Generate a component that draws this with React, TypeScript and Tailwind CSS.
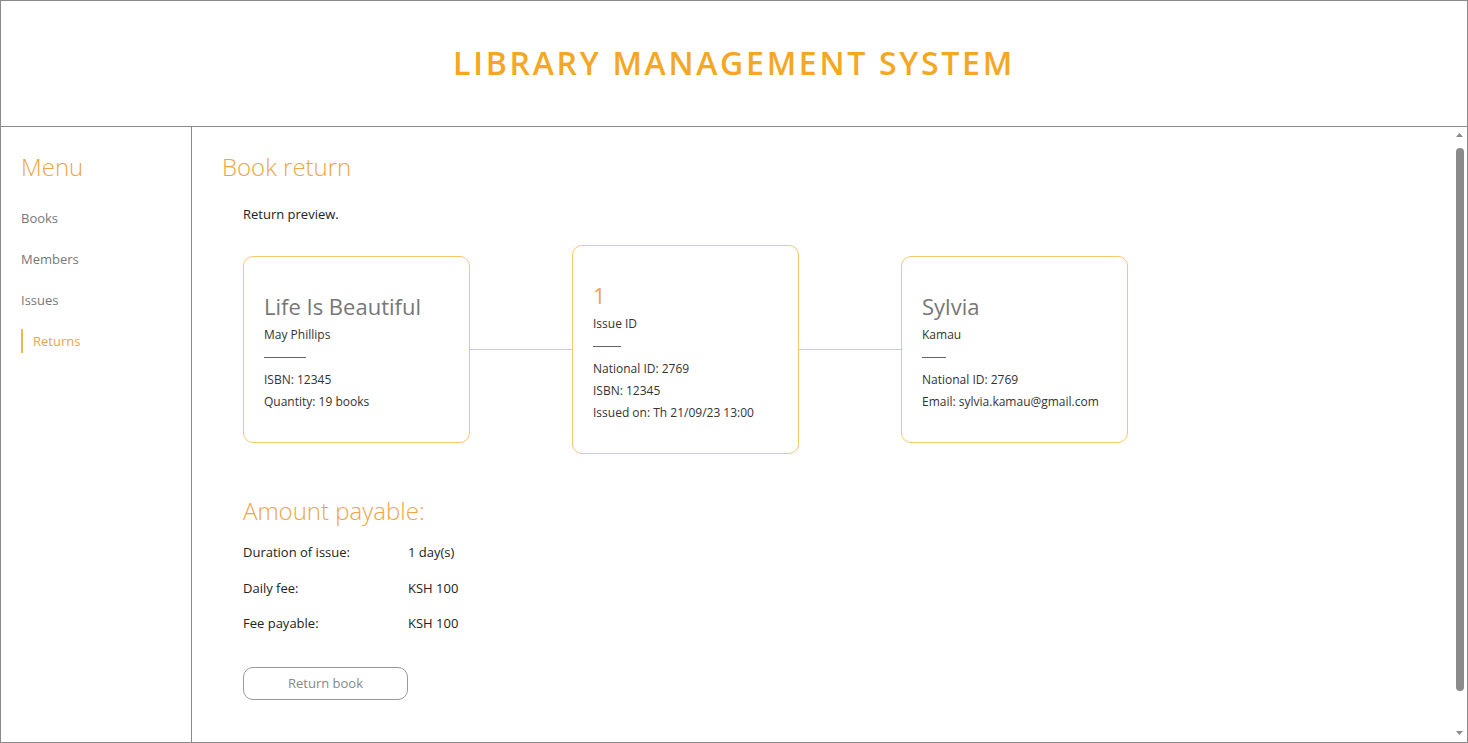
import React from 'react'

const font = { fontFamily: '"Open Sans", "Liberation Sans", sans-serif' }

const Card = ({ title, titleClass, sub, lineW, rows }: { title: string; titleClass: string; sub: string; lineW: string; rows: string[] }) => (
  <div className="w-[227px] rounded-[10px] border border-[#f6c76c] px-[20px] pt-[34px] pb-[31px] bg-white">
    <div className={`text-[22px] leading-[30px] ${titleClass}`}>{title}</div>
    <div className="text-[12px] leading-[18px] text-[#333] mt-[5px]">{sub}</div>
    <div className={`h-px bg-[#666] mt-[13px] mb-[13px] ${lineW}`}></div>
    <div className="flex flex-col gap-[4px]">
      {rows.map((r) => (
        <div key={r} className="text-[12px] leading-[18px] text-[#333]">{r}</div>
      ))}
    </div>
  </div>
)

const Connector = () => <div className="w-[102px] h-px bg-[#f6c76c]"></div>

const App = () => {
  return (
    <div className="h-[743px] w-full border border-[#8a8a8a] flex flex-col bg-white overflow-hidden" style={font}>
      <div className="h-[126px] shrink-0 border-b border-[#8a8a8a] flex items-center justify-center">
        <h1 className="text-[32px] font-semibold tracking-[0.085em] text-[#f5a623] mt-[-2px]">LIBRARY MANAGEMENT SYSTEM</h1>
      </div>

      <div className="flex flex-1 min-h-0">
        <div className="w-[191px] shrink-0 border-r border-[#8a8a8a] pl-[20px] pt-[24px]">
          <h2 className="text-[24px] leading-[32px] font-light text-[#efa445]">Menu</h2>
          <div className="mt-[26px] flex flex-col gap-[23px] text-[13px] leading-[18px] text-[#777]">
            <div>Books</div>
            <div>Members</div>
            <div>Issues</div>
            <div className="border-l-2 border-[#efb84a] pl-[10px] py-[3px] -my-[3px] text-[#efa445]">Returns</div>
          </div>
        </div>

        <div className="flex-1 pl-[30px] pt-[24px]">
          <h2 className="text-[24px] leading-[32px] font-light text-[#efa445]">Book return</h2>
          <div className="pl-[21px]">
            <p className="mt-[22px] text-[13px] leading-[18px] text-[#222]">Return preview.</p>

            <div className="mt-[22px] flex items-center">
              <Card
                title="Life Is Beautiful"
                titleClass="text-[#777]"
                sub="May Phillips"
                lineW="w-[42px]"
                rows={['ISBN: 12345', 'Quantity: 19 books']}
              />
              <Connector />
              <Card
                title="1"
                titleClass="text-[#efa445]"
                sub="Issue ID"
                lineW="w-[28px]"
                rows={['National ID: 2769', 'ISBN: 12345', 'Issued on: Th 21/09/23 13:00']}
              />
              <Connector />
              <Card
                title="Sylvia"
                titleClass="text-[#777]"
                sub="Kamau"
                lineW="w-[24px]"
                rows={['National ID: 2769', 'Email: sylvia.kamau@gmail.com']}
              />
            </div>

            <h2 className="mt-[41px] text-[24px] leading-[32px] font-light text-[#efa445]">Amount payable:</h2>
            <div className="mt-[16px] flex flex-col gap-[17.5px] text-[13px] leading-[18px] text-[#222]">
              <div className="flex"><span className="w-[165px]">Duration of issue:</span><span>1 day(s)</span></div>
              <div className="flex"><span className="w-[165px]">Daily fee:</span><span>KSH 100</span></div>
              <div className="flex"><span className="w-[165px]">Fee payable:</span><span>KSH 100</span></div>
            </div>

            <button className="mt-[35px] w-[165px] h-[33px] rounded-[10px] border border-[#999] text-[13px] text-[#888] bg-white">Return book</button>
          </div>
        </div>

        <div className="w-[15px] shrink-0 flex flex-col items-center pt-[5px] pb-[5px]">
          <svg width="7" height="4" viewBox="0 0 7 4" className="mt-[1px]"><path d="M3.5 0 L7 4 L0 4 Z" fill="#8a8a8a" /></svg>
          <div className="w-[8px] flex-1 rounded-full bg-[#8a8a8a] mt-[11px] mb-[40px]"></div>
          <svg width="7" height="4" viewBox="0 0 7 4" className="mb-[2px]"><path d="M0 0 L7 0 L3.5 4 Z" fill="#8a8a8a" /></svg>
        </div>
      </div>
    </div>
  )
}

export default App
